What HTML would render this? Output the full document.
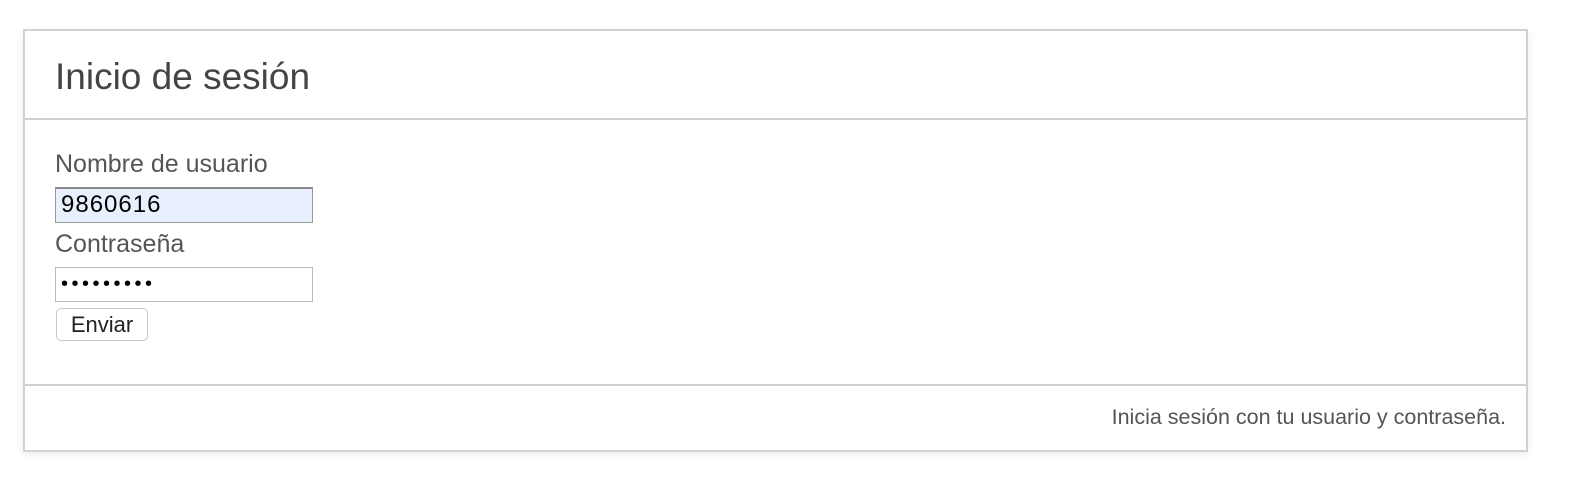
<!DOCTYPE html>
<html><head><meta charset="utf-8"><style>
html,body{margin:0;padding:0;background:#fff;width:1584px;height:494px;overflow:hidden;font-family:"Liberation Sans",Arial,sans-serif;color:#444;}
.box{position:absolute;left:23px;top:29px;width:1501px;height:419px;border:2px solid #d2d2d2;box-shadow:0 3px 8px rgba(0,0,0,0.08);background:#fff;}
.hd{position:absolute;left:0;top:0;right:0;height:87px;border-bottom:2px solid #d0d0d0;}
.hd h1{position:absolute;left:30px;top:25px;margin:0;font-weight:normal;font-size:37px;color:#444;line-height:42px;}
.lbl{position:absolute;left:30px;font-size:25px;color:#555;line-height:28px;}
.inp{position:absolute;left:30px;width:258px;box-sizing:border-box;border:1px solid #bbb;font-size:22px;color:#000;padding-left:5px;}
.btn{position:absolute;left:31px;top:277px;width:92px;height:33px;box-sizing:border-box;border:1px solid #c8c8c8;border-radius:5px;font-size:22px;color:#222;text-align:center;line-height:31px;background:#fff;}
.ft{position:absolute;left:0;right:0;top:353px;border-top:2px solid #d0d0d0;}
.ft span{position:absolute;right:20px;top:19px;font-size:21.5px;color:#555;}
</style></head><body>
<div class="box">
<div class="hd"><h1>Inicio de sesión</h1></div>
<div class="lbl" style="top:119px">Nombre de usuario</div>
<div class="inp" style="top:156px;height:36px;background:#e8f0fd;border-color:#999;border-top:2px solid #888;line-height:32px;font-size:24px;letter-spacing:1px;">9860616</div>
<div class="lbl" style="top:199px">Contraseña</div>
<div class="inp" style="top:236px;height:35px;background:#fff;line-height:33px;letter-spacing:3.5px;font-size:20px;">•••••••••</div>
<div class="btn">Enviar</div>
<div class="ft"><span>Inicia sesión con tu usuario y contraseña.</span></div>
</div>
</body></html>
